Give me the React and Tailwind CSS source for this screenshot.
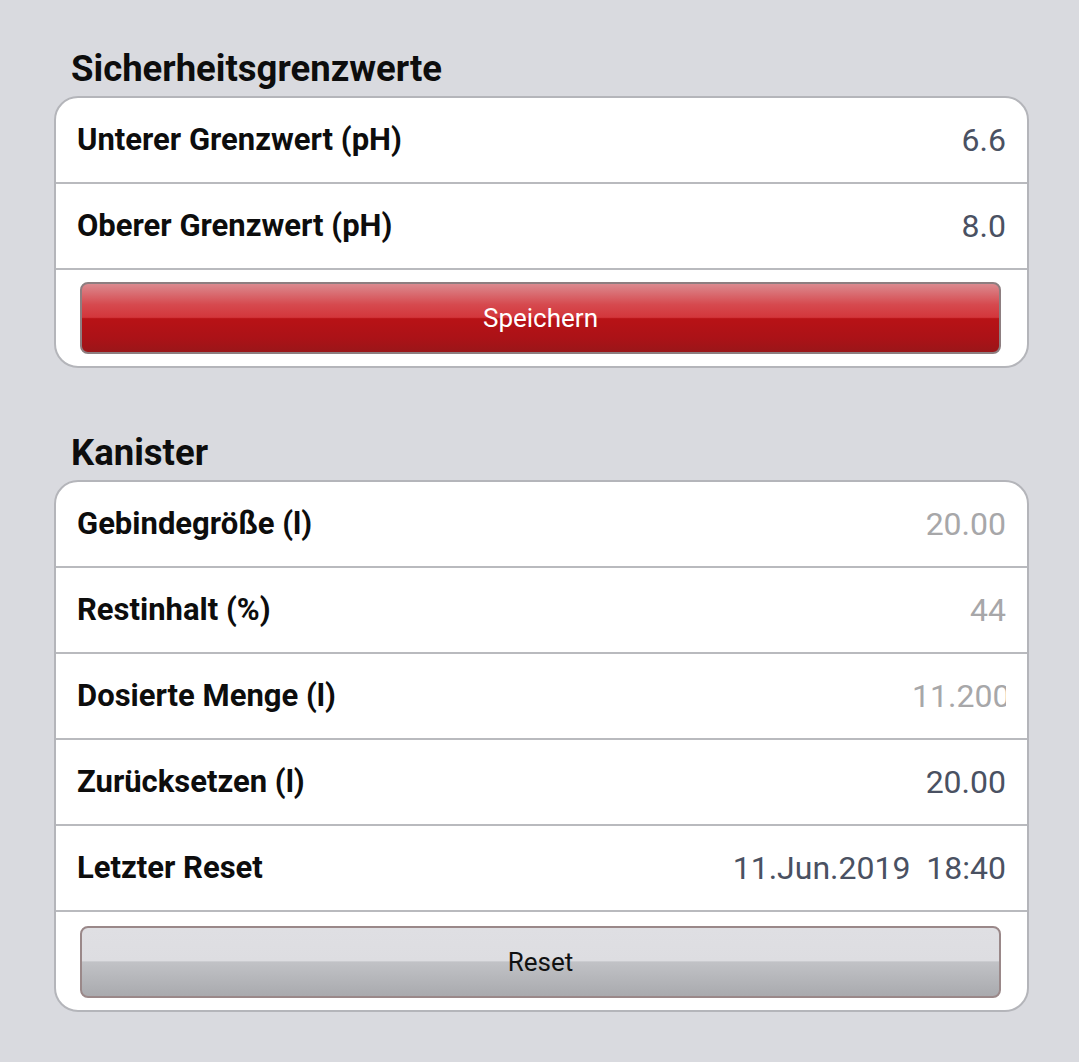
const font = { fontFamily: 'Roboto, "Noto Sans", sans-serif' };

const Row = ({ label, value, muted, clip }) => (
  <div className="flex h-[86px] items-center justify-between border-b-2 border-[#b9babe] pl-[21px] pr-[21px]">
    <span className="text-[31px] font-bold text-[#0d0d0d]">{label}</span>
    <div
      className={`overflow-hidden whitespace-pre text-right text-[32px] ${
        muted ? 'text-[#a7a7a9]' : 'text-[#4a5162]'
      } ${clip ? 'w-[94px]' : ''}`}
    >
      {value}
    </div>
  </div>
);

const Section = ({ title, children, className }) => (
  <div className={className}>
    <h2 className="pl-[17px] text-[36.5px] font-bold leading-[36px] text-[#0d0d0d]">{title}</h2>
    <div className="mt-[9px] w-[975px] overflow-hidden rounded-[24px] border-2 border-[#b4b5ba] bg-white">
      {children}
    </div>
  </div>
);

export default function App() {
  return (
    <div className="min-h-[1062px] w-full bg-[#d9dadf] pl-[54px] pt-[51px]" style={font}>
      <Section title="Sicherheitsgrenzwerte">
        <Row label="Unterer Grenzwert (pH)" value="6.6" />
        <Row label="Oberer Grenzwert (pH)" value="8.0" />
        <div className="pb-[12px] pl-[24px] pr-[26px] pt-[12px]">
          <button className="flex h-[72px] w-full items-center justify-center rounded-[8px] border-2 border-[#8d7e80] bg-[linear-gradient(to_bottom,#db8a8f_0%,#d64a4f_30%,#d3363b_49%,#b81216_51%,#ab1217_80%,#9a1619_100%)] text-[26px] text-white">
            Speichern
          </button>
        </div>
      </Section>

      <Section title="Kanister" className="mt-[67px]">
        <Row label="Gebindegröße (l)" value="20.00" muted />
        <Row label="Restinhalt (%)" value="44" muted />
        <Row label="Dosierte Menge (l)" value="11.200" muted clip />
        <Row label="Zurücksetzen (l)" value="20.00" />
        <Row label="Letzter Reset" value="11.Jun.2019  18:40" />
        <div className="pb-[12px] pl-[24px] pr-[26px] pt-[14px]">
          <button className="flex h-[72px] w-full items-center justify-center rounded-[8px] border-2 border-[#9a8889] bg-[linear-gradient(to_bottom,#dfdfe3_0%,#dddde1_48%,#c1c2c6_50%,#a9aaae_100%)] text-[26px] text-[#111111]">
            Reset
          </button>
        </div>
      </Section>
    </div>
  );
}
